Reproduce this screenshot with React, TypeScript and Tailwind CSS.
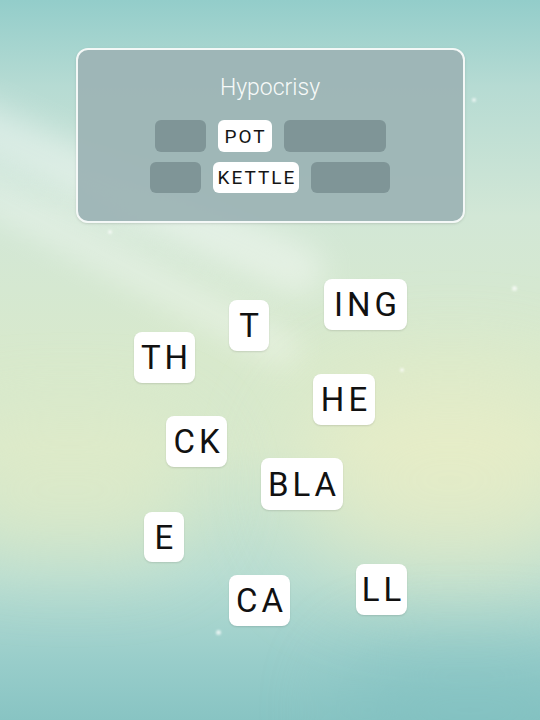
import React from 'react';

interface Tile {
  text: string;
  x: number;
  y: number;
  w: number;
  h: number;
}

const tiles: Tile[] = [
  { text: 'ING', x: 324, y: 279, w: 83, h: 51 },
  { text: 'T', x: 229, y: 300, w: 40, h: 51 },
  { text: 'TH', x: 134, y: 332, w: 61, h: 51 },
  { text: 'HE', x: 313, y: 374, w: 62, h: 51 },
  { text: 'CK', x: 166, y: 416, w: 61, h: 51 },
  { text: 'BLA', x: 261, y: 458, w: 82, h: 52 },
  { text: 'E', x: 144, y: 512, w: 40, h: 50 },
  { text: 'CA', x: 229, y: 575, w: 61, h: 51 },
  { text: 'LL', x: 356, y: 564, w: 51, h: 51 },
];

const sparkles = [
  { x: 108, y: 230, s: 4 },
  { x: 472, y: 98, s: 4 },
  { x: 512, y: 286, s: 5 },
  { x: 216, y: 630, s: 5 },
  { x: 150, y: 356, s: 4 },
  { x: 400, y: 368, s: 4 },
];

function Slot({ w }: { w: number }) {
  return <div className="h-full rounded-md bg-[#7f9597]" style={{ width: w }} />;
}

function Word({ text, w }: { text: string; w: number }) {
  return (
    <div
      className="flex h-full items-center justify-center rounded-md bg-white pl-[2px] text-[19px] leading-none tracking-[2px] text-[#151515]"
      style={{ width: w }}
    >
      {text}
    </div>
  );
}

export default function App() {
  return (
    <div className="relative h-[720px] w-[540px] overflow-hidden bg-[linear-gradient(180deg,#93cdca_0%,#b6dbd3_12%,#d2e7d6_30%,#d8e9cc_50%,#d6e8cc_62%,#b6dcd2_80%,#98cdca_92%,#88c4c3_100%)] font-['Roboto','Liberation_Sans',sans-serif]">
      {/* soft light */}
      <div className="pointer-events-none absolute left-[300px] top-[380px] h-[200px] w-[300px] rounded-full bg-[#f2f0c4] opacity-60 blur-[50px]" />
      <div className="pointer-events-none absolute left-[-60px] top-[420px] h-[140px] w-[260px] rounded-full bg-[#e6edc6] opacity-60 blur-[40px]" />
      <div className="pointer-events-none absolute left-[-80px] top-[170px] h-[50px] w-[420px] rotate-[24deg] rounded-full bg-white opacity-40 blur-[16px]" />
      <div className="pointer-events-none absolute left-[-60px] top-[250px] h-[36px] w-[380px] rotate-[28deg] rounded-full bg-white opacity-30 blur-[14px]" />
      <div className="pointer-events-none absolute left-[340px] top-[650px] h-[120px] w-[260px] rounded-full bg-[#7ebfc0] opacity-50 blur-[40px]" />
      {sparkles.map((p, i) => (
        <div
          key={i}
          className="pointer-events-none absolute rounded-full bg-white opacity-70 blur-[1px]"
          style={{ left: p.x, top: p.y, width: p.s, height: p.s }}
        />
      ))}

      <div className="relative flex justify-center pt-[48px]">
        <div className="flex h-[175px] w-[389px] flex-col items-center rounded-[12px] border-2 border-[#f4f8f7] bg-[#9db4b5]/95 pt-[22px] shadow-sm">
          <div className="h-[32px] text-[23px] font-light leading-[32px] text-[#f7faf9]">Hypocrisy</div>
          <div className="mt-[16px] flex h-[32px] gap-3">
            <Slot w={51} />
            <Word text="POT" w={54} />
            <Slot w={102} />
          </div>
          <div className="mt-[10px] flex h-[31px] gap-3">
            <Slot w={51} />
            <Word text="KETTLE" w={86} />
            <Slot w={79} />
          </div>
        </div>
      </div>

      {tiles.map((t) => (
        <div
          key={t.text}
          className="absolute flex items-center justify-center rounded-[8px] bg-white pl-[4px] text-[33px] leading-none tracking-[4px] text-[#111] shadow-[0_1px_2px_rgba(0,0,0,0.12)]"
          style={{ left: t.x, top: t.y, width: t.w, height: t.h }}
        >
          {t.text}
        </div>
      ))}
    </div>
  );
}
